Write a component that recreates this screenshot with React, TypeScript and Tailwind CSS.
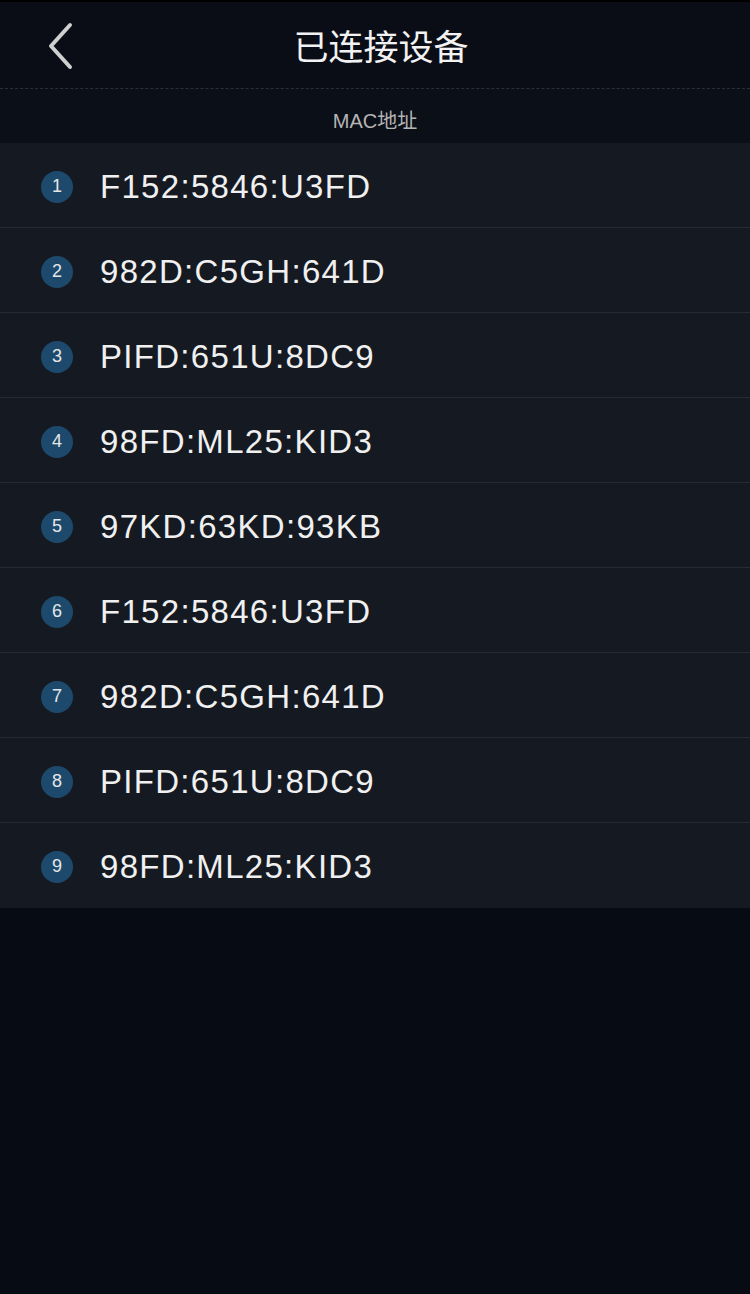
const macs = [
  "F152:5846:U3FD",
  "982D:C5GH:641D",
  "PIFD:651U:8DC9",
  "98FD:ML25:KID3",
  "97KD:63KD:93KB",
  "F152:5846:U3FD",
  "982D:C5GH:641D",
  "PIFD:651U:8DC9",
  "98FD:ML25:KID3",
];

const App = () => {
  return (
    <div
      className="min-h-[1294px] w-[750px] bg-[#070b14] text-white"
      style={{ fontFamily: '"Liberation Sans", "Noto Sans CJK SC", sans-serif' }}
    >
      <header className="relative flex h-[88px] items-center justify-center border-t-2 border-black bg-[#0a0d16]">
        <button className="absolute left-[44px] top-[20px] flex h-[48px] w-[32px] items-center justify-center">
          <svg width="30" height="48" viewBox="0 0 30 48" fill="none">
            <path d="M25 3 L6 24 L25 45" stroke="#cfcfcf" strokeWidth="4" strokeLinecap="round" strokeLinejoin="round" />
          </svg>
        </button>
        <h1
          className="ml-[12px] text-[35px] font-normal text-[#f2f2f2]"
          style={{ fontFamily: '"Noto Sans CJK SC", sans-serif' }}
        >
          已连接设备
        </h1>
      </header>

      <div className="flex h-[55px] items-center justify-center border-t border-dashed border-[#2a2f38] bg-[#0b0f18] pt-[9px] text-[20px] text-[#b5b5b5]">
        MAC地址
      </div>

      <ul className="bg-[#151a22]">
        {macs.map((mac, index) => (
          <li
            key={index}
            className="flex h-[85px] items-center border-b border-[#262b33] pt-[3px] last:border-b-0"
          >
            <span className="ml-[41px] flex h-[32px] w-[32px] items-center justify-center rounded-full bg-[#1d4a6c] pb-[1px] text-[18px] text-[#e6e6e6]">
              {index + 1}
            </span>
            <span className="ml-[27px] text-[33px] tracking-[1.3px] text-[#f0f0f0]">{mac}</span>
          </li>
        ))}
      </ul>
    </div>
  );
};

export default App;
